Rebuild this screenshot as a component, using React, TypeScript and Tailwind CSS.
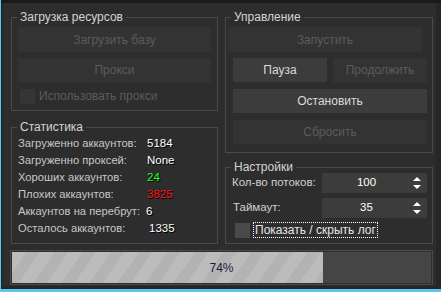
import React from "react";

const font = { fontFamily: '"Liberation Sans", Arial, sans-serif' };

const Group = ({ title, className, children }: { title: string; className: string; children: React.ReactNode }) => (
  <fieldset className={"border border-[#4a4a4a] px-0 " + className}>
    <legend className="ml-[5px] px-[3px] h-[14px] leading-[14px] text-[12px] text-[#d4d4d4]">{title}</legend>
    {children}
  </fieldset>
);

const Btn = ({ label, disabled, className }: { label: string; disabled?: boolean; className: string }) => (
  <div
    className={
      "flex items-center justify-center text-[12px] " +
      (disabled ? "bg-[#333333] text-[#5c5c5c] " : "bg-[#3c3c3c] text-[#dadada] ") +
      className
    }
  >
    {label}
  </div>
);

const Spin = ({ value }: { value: string }) => (
  <div className="relative ml-auto mr-[5px] flex h-[20px] w-[105px] items-center justify-center bg-[#3c3c3c] text-white">
    <span className="mr-[16px]">{value}</span>
    <svg className="absolute right-[6px] top-[4px]" width="8" height="12" viewBox="0 0 8 12">
      <path d="M0 4 L4 0 L8 4 Z" fill="#fff" />
      <path d="M0 8 L8 8 L4 12 Z" fill="#fff" />
    </svg>
  </div>
);

const stats: [string, string, string][] = [
  ["Загруженно аккаунтов:", "5184", "text-white ml-[135px]"],
  ["Загруженно проксей:", "None", "text-white ml-[135px]"],
  ["Хороших аккаунтов:", "24", "text-[#22ff22] ml-[135px]"],
  ["Плохих аккаунтов:", "3825", "text-[#ff1010] ml-[135px]"],
  ["Аккаунтов на перебрут:", "6", "text-white ml-[134px]"],
  ["Осталось аккаунтов:", "1335", "text-white ml-[137px]"],
];

export default function App() {
  return (
    <div
      style={font}
      className="flex h-[292px] w-[441px] flex-col overflow-hidden border-b-[3px] border-l border-[#5cc6f2] bg-[#262626] text-[11.5px]"
    >
      <div className="h-[3px] shrink-0 bg-[#1b1b1b]" />
      <div className="mb-[3px] ml-[2px] mr-[5px] flex flex-1 flex-col bg-[#2d2d2d]">
        <div className="mt-[7px] flex gap-[7px] pl-[8px]">
          {/* left column */}
          <div className="flex w-[207px] flex-col gap-[9px]">
            <Group title="Загрузка ресурсов" className="h-[101px]">
              <Btn label="Загрузить базу" disabled className="mx-[6px] mt-[3px] h-[25px]" />
              <Btn label="Прокси" disabled className="mx-[6px] mt-[6px] h-[24px]" />
              <div className="ml-[8px] mt-[5px] flex items-center gap-[4px] text-[12px] text-[#5c5c5c]">
                <div className="h-[15px] w-[15px] bg-[#353535]" />
                <span>Использовать прокси</span>
              </div>
            </Group>
            <Group title="Статистика" className="h-[124px]">
              <div className="mt-[1px] flex flex-col">
                {stats.map(([l, v, c]) => (
                  <div key={l} className="relative flex h-[17px] items-center text-[#c8c8c8]">
                    <span className="absolute left-[6px] text-[11.2px]">{l}</span>
                    <span className={c + " [text-shadow:1px_1px_0_#000]"}>{v}</span>
                  </div>
                ))}
              </div>
            </Group>
          </div>
          {/* right column */}
          <div className="flex w-[208px] flex-col gap-[7px]">
            <Group title="Управление" className="h-[143px]">
              <Btn label="Запустить" disabled className="ml-[2px] mr-[10px] mt-[3px] h-[25px]" />
              <div className="ml-[7px] mr-[5px] mt-[6px] flex gap-[6px]">
                <Btn label="Пауза" className="h-[24px] flex-1" />
                <Btn label="Продолжить" disabled className="h-[24px] flex-1" />
              </div>
              <Btn label="Остановить" className="ml-[7px] mr-[5px] mt-[7px] h-[24px]" />
              <Btn label="Сбросить" disabled className="ml-[7px] mr-[5px] mt-[7px] h-[24px]" />
            </Group>
            <Group title="Настройки" className="h-[84px]">
              <div className="mt-[-1px] flex h-[20px] items-center text-[#d0d0d0]">
                <span className="ml-[6px]">Кол-во потоков:</span>
                <Spin value="100" />
              </div>
              <div className="mt-[5px] flex h-[20px] items-center text-[#d0d0d0]">
                <span className="ml-[7px]">Таймаут:</span>
                <Spin value="35" />
              </div>
              <div className="ml-[9px] mt-[4px] flex items-center gap-[3px] text-[12px] text-[#e6e6e6]">
                <div className="h-[15px] w-[15px] bg-[#4a4a4a]" />
                <span className="border border-dotted border-white px-[1px] leading-[14px]">Показать / скрыть лог</span>
              </div>
            </Group>
          </div>
        </div>
        <div className="relative ml-[7px] mt-[6px] flex h-[35px] w-[423px] border border-[#4a4a4a] bg-[#2f2f2f] p-[1px]">
          <div className="h-full w-[311px] bg-[repeating-linear-gradient(125deg,#bcbcbc_0px,#bcbcbc_12px,#b3b3b3_12px,#b3b3b3_23px)]" />
          <div className="h-full flex-1 bg-[#454545]" />
          <span className="absolute inset-0 flex items-center justify-center text-[12px] text-[#1a1a3c]">74%</span>
        </div>
      </div>
    </div>
  );
}
